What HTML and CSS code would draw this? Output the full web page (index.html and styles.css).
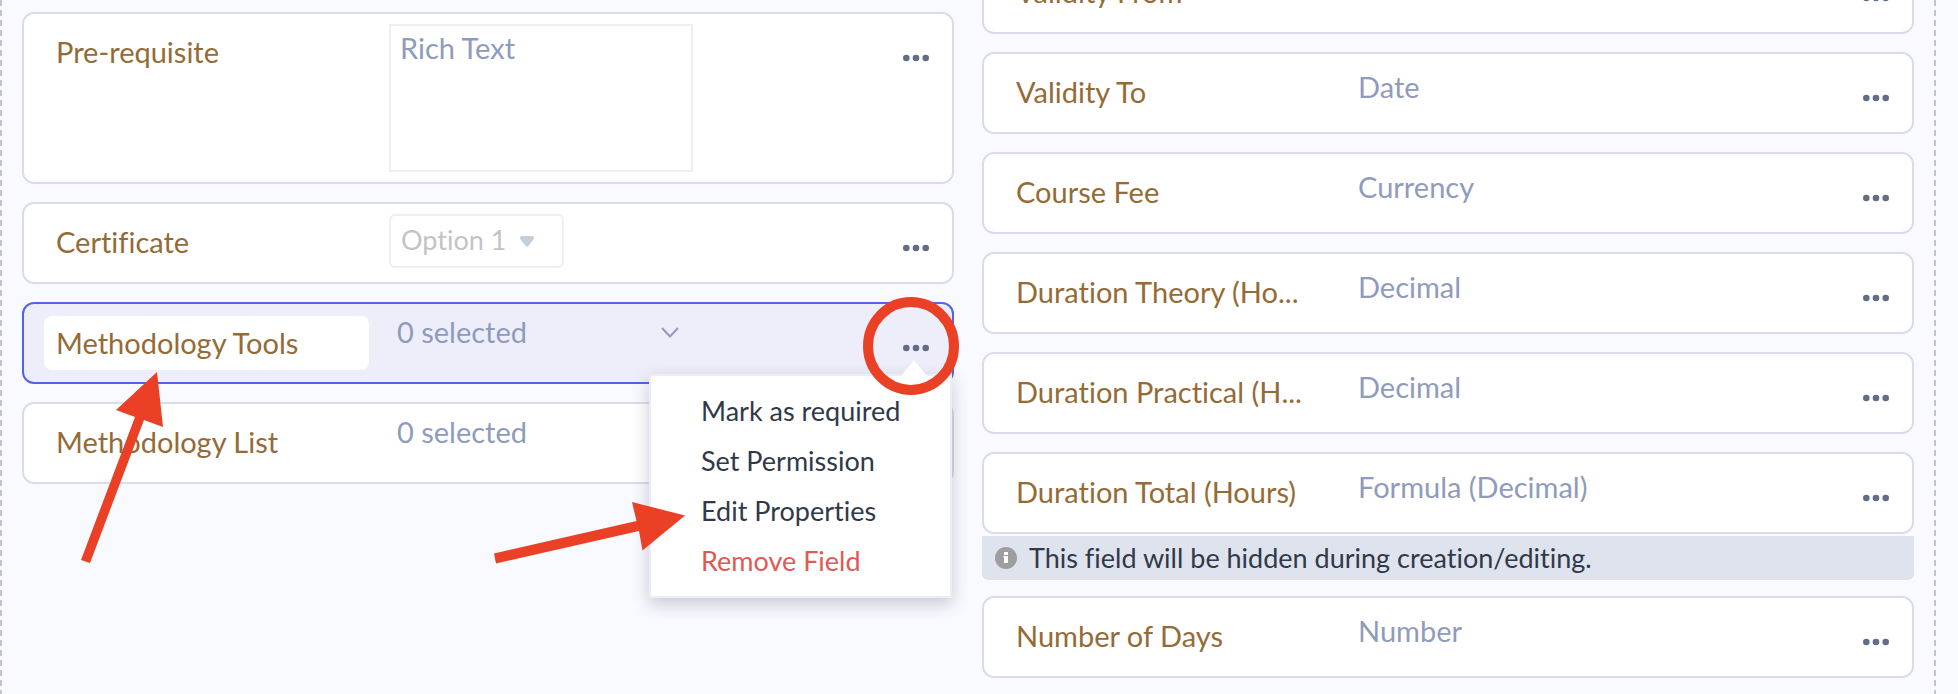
FILE: index.html
```html
<!DOCTYPE html>
<html lang="en">
<head>
<meta charset="utf-8">
<title>Form layout</title>
<link rel="stylesheet" href="styles.css">
</head>
<body>
<svg class="sprite" aria-hidden="true">
  <symbol id="dots" viewBox="0 0 26 8"><circle cx="3.3" cy="4" r="3.3"/><circle cx="13" cy="4" r="3.3"/><circle cx="22.7" cy="4" r="3.3"/></symbol>
</svg>
<main class="section">
  <div class="column">
    <div class="field tall">
      <label class="name" for="prereq">Pre-requisite</label>
      <div class="value boxed"><textarea id="prereq" class="rich" readonly>Rich Text</textarea></div>
      <button class="more" aria-label="More"><svg><use href="#dots"/></svg></button>
    </div>
    <div class="field">
      <label class="name" for="cert">Certificate</label>
      <div class="value boxed">
        <div class="pick">
          <select id="cert"><option>Option 1</option></select>
          <svg class="caret" viewBox="0 0 14 11"><path d="M2 0H12Q14 0 14 2Q14 3 13 4L8.300 10Q7 11.500 5.700 10L1 4Q0 3 0 2Q0 0 2 0Z"/></svg>
        </div>
      </div>
      <button class="more" aria-label="More"><svg><use href="#dots"/></svg></button>
    </div>
    <div class="field selected">
      <div class="rename">
        <input class="name" aria-label="Field name" value="Methodology Tools">
        <svg class="mark arrow-name" viewBox="0 0 84 194"><path d="M77 2L36 40L55 47L1 190L10 193L64 50L83 57Z"/></svg>
      </div>
      <button class="value multi">0 selected<svg class="chevron" viewBox="0 0 18 11"><path d="M1 1L9 9.500L17 1"/></svg></button>
      <button class="more" aria-label="More"><svg><use href="#dots"/></svg></button>
      <div class="menu" role="menu">
        <svg class="tip" viewBox="0 0 26 16"><path d="M0 16L13 0L26 16Z"/></svg>
        <button role="menuitem">Mark as required</button>
        <button role="menuitem">Set Permission</button>
        <button role="menuitem">Edit Properties</button>
        <button role="menuitem" class="danger">Remove Field</button>
        <svg class="mark ring" viewBox="0 0 96 98"><ellipse cx="48" cy="49" rx="43" ry="44"/></svg>
        <svg class="mark arrow-edit" viewBox="0 0 194 64"><path d="M192 14.500L139 1L143.500 20L1 52.500L3 62.500L146 30L149.500 49.500Z"/></svg>
      </div>
    </div>
    <div class="field">
      <span class="name">Methodology List</span>
      <button class="value multi">0 selected</button>
      <button class="more" aria-label="More"><svg><use href="#dots"/></svg></button>
    </div>
  </div>
  <div class="column shifted">
    <div class="field"><span class="name">Validity From</span><span class="value">Date</span><button class="more" aria-label="More"><svg><use href="#dots"/></svg></button></div>
    <div class="field"><span class="name">Validity To</span><span class="value">Date</span><button class="more" aria-label="More"><svg><use href="#dots"/></svg></button></div>
    <div class="field"><span class="name">Course Fee</span><span class="value">Currency</span><button class="more" aria-label="More"><svg><use href="#dots"/></svg></button></div>
    <div class="field"><span class="name">Duration Theory (Ho...</span><span class="value">Decimal</span><button class="more" aria-label="More"><svg><use href="#dots"/></svg></button></div>
    <div class="field"><span class="name">Duration Practical (H...</span><span class="value">Decimal</span><button class="more" aria-label="More"><svg><use href="#dots"/></svg></button></div>
    <div class="with-note">
      <div class="field"><span class="name">Duration Total (Hours)</span><span class="value">Formula (Decimal)</span><button class="more" aria-label="More"><svg><use href="#dots"/></svg></button></div>
      <p class="note"><svg viewBox="0 0 22 22"><circle cx="11" cy="11" r="11" fill="#9e9e9e"/><path d="M9 5h4v3H9zM8.500 9H13v7H9v-5.500H8.500z" fill="#fff"/></svg>This field will be hidden during creation/editing.</p>
    </div>
    <div class="field"><span class="name">Number of Days</span><span class="value">Number</span><button class="more" aria-label="More"><svg><use href="#dots"/></svg></button></div>
  </div>
</main>
</body>
</html>
```
FILE: styles.css
```css
* { box-sizing: border-box; }

html, body { height: 100%; }

body {
  margin: 0;
  overflow: hidden;
  background: #f9faff;
  color: #313949;
  font: 29px/36px Lato, "Open Sans", sans-serif;
  font-variant-ligatures: none;
}

button, input, select, textarea {
  margin: 0;
  padding: 0;
  border: 0;
  background: none;
  color: inherit;
  font: inherit;
  font-variant-ligatures: none;
  text-align: left;
  appearance: none;
}

.sprite { display: none; }

.section {
  display: grid;
  grid-template-columns: 1fr 1fr;
  gap: 28px;
  align-items: start;
  height: 100%;
  margin-right: 22px;
  padding: 0 20px;
  background:
    repeating-linear-gradient(#c3c2d0 0 6px, transparent 6px 10px) left top / 2px 100% no-repeat,
    repeating-linear-gradient(#c3c2d0 0 6px, transparent 6px 10px) right top / 2px 100% no-repeat;
  border: solid transparent;
  border-width: 0 2px;
  background-origin: border-box;
}

.column {
  display: flex;
  flex-direction: column;
  gap: 18px;
  padding-top: 12px;
}

.shifted { margin-top: -60px; }

.field {
  position: relative;
  display: flex;
  align-items: flex-start;
  gap: 20px;
  min-height: 82px;
  padding: 0 23px 0 20px;
  background: #fff;
  border: 2px solid #dcdbed;
  border-radius: 12px;
}

.tall { min-height: 172px; }

.selected {
  z-index: 1;
  background: #eeeefa;
  border-color: #5263e8;
}

.name {
  flex: none;
  width: 325px;
  height: 54px;
  margin-top: 12px;
  padding: 0 0 2px 12px;
  color: #946b36;
  line-height: 52px;
  white-space: nowrap;
}

.rename { position: relative; display: flex; }
.rename .name { background: #fff; border-radius: 8px; }

.value {
  flex: 1;
  margin-top: 15px;
  padding-left: 9px;
  color: #8f9bbd;
}

.boxed { margin-top: 10px; padding-left: 0; }

.rich {
  display: block;
  width: 304px;
  height: 148px;
  padding: 4px 9px;
  border: 2px solid #eeeef3;
  resize: none;
  overflow: hidden;
}

.pick { position: relative; width: 175px; }

.pick select {
  display: block;
  width: 100%;
  height: 54px;
  padding: 0 10px 2px;
  border: 2px solid #eeeef3;
  border-radius: 6px;
  color: #c2c3c8;
  font-size: 27px;
}

.caret {
  position: absolute;
  top: 22px;
  right: 30px;
  width: 14px;
  height: 11px;
  fill: #c3ced8;
}

.multi {
  display: flex;
  justify-content: space-between;
  align-items: center;
  flex: 0 0 290px;
  margin-top: 10px;
  padding-left: 8px;
}

.chevron {
  width: 18px;
  height: 11px;
  fill: none;
  stroke: #8f9bbd;
  stroke-width: 2;
}

.more {
  display: flex;
  margin: 40px 0 0 auto;
}

.more svg { width: 26px; height: 8px; fill: #616c88; }

.menu {
  position: absolute;
  top: 70px;
  right: 0;
  width: 303px;
  padding: 10px 0;
  background: #fff;
  border: 2px solid #eceef4;
  box-shadow: 0 6px 16px rgba(40, 40, 70, 0.24);
}

.menu button {
  display: block;
  width: 100%;
  height: 50px;
  padding-left: 50px;
  font-size: 27px;
}

.menu .danger { color: #e05a55; }

.tip {
  position: absolute;
  top: -16px;
  right: 23px;
  width: 26px;
  height: 16px;
  fill: #fff;
}

.mark {
  position: absolute;
  fill: #ea4025;
  pointer-events: none;
}

.arrow-name { left: 36px; top: 66px; width: 84px; height: 194px; }

.ring {
  top: -79px;
  right: -9px;
  width: 96px;
  height: 98px;
  fill: none;
  stroke: #ea4025;
  stroke-width: 10;
}

.arrow-edit { left: -158px; top: 125px; width: 194px; height: 64px; }

.note {
  display: flex;
  align-items: center;
  gap: 12px;
  height: 44px;
  margin: 2px 0 -2px;
  padding-left: 13px;
  background: #dfe3ee;
  border-radius: 0 0 6px 6px;
  font-size: 27px;
}

.note svg { width: 22px; height: 22px; }
```
